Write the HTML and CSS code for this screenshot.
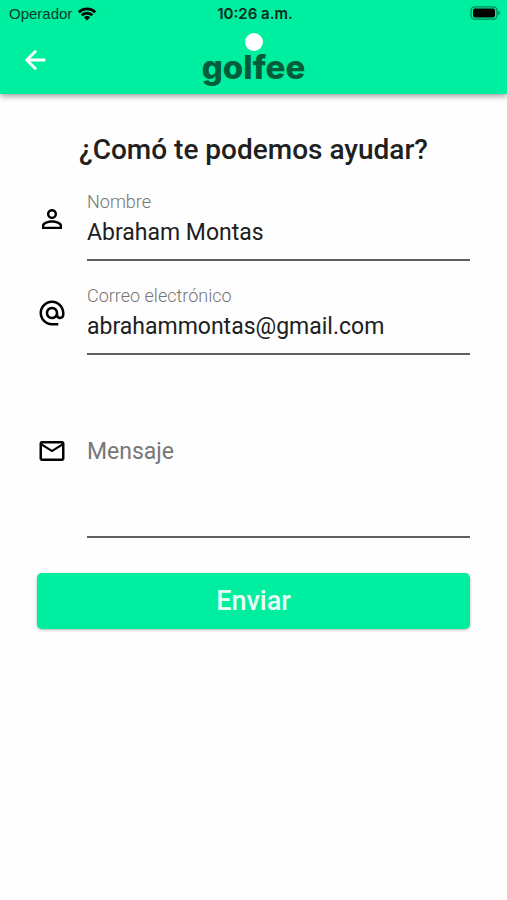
FILE: index.html
```html
<!DOCTYPE html>
<html lang="es">
<head>
<meta charset="utf-8">
<meta name="viewport" content="width=device-width, initial-scale=1">
<title>golfee</title>
<link rel="stylesheet" href="styles.css">
</head>
<body>
<header class="app-header">
  <div class="status-bar">
    <div class="carrier">
      <span>Operador</span>
      <svg class="wifi" viewBox="0 0 20 15" aria-hidden="true">
        <path d="M1.8 6.2a11.8 11.8 0 0 1 16.4 0M4.7 9.2a7.6 7.6 0 0 1 10.6 0" fill="none" stroke="currentColor" stroke-width="2.7"/>
        <path d="M10 14.4 6.9 11.3a4.4 4.4 0 0 1 6.2 0z" fill="currentColor"/>
      </svg>
    </div>
    <time class="clock">10:26 a.m.</time>
    <svg class="battery" viewBox="0 0 31 14" aria-hidden="true">
      <rect x="1" y=".8" width="26" height="12.4" rx="3.6" fill="none" stroke="currentColor" stroke-width="1.2" opacity=".45"/>
      <rect x="3" y="2.6" width="22" height="8.8" rx="1.8" fill="currentColor"/>
      <path d="M28.3 4.8a2.4 2.4 0 0 1 0 4.4z" fill="currentColor" opacity=".5"/>
    </svg>
  </div>
  <div class="toolbar">
    <button class="back" type="button" aria-label="Volver">
      <svg viewBox="0 0 24 24" aria-hidden="true"><path d="M20 11H7.83l5.59-5.59L12 4l-8 8 8 8 1.41-1.41L7.83 13H20z" fill="currentColor" stroke="currentColor" stroke-width=".4"/></svg>
    </button>
    <div class="brand"><span class="ball"></span><span class="wordmark">golfee</span></div>
  </div>
</header>
<main class="contact">
  <h1>¿Comó te podemos ayudar?</h1>
  <form class="form">
    <div class="row">
      <svg class="icon" viewBox="0 0 24 24" aria-hidden="true"><path d="M12 5.9a2.1 2.1 0 1 1 0 4.2 2.1 2.1 0 0 1 0-4.2m0 9c2.97 0 6.1 1.46 6.1 2.1v1.1H5.9V17c0-.64 3.13-2.1 6.1-2.1M12 4C9.79 4 8 5.79 8 8s1.79 4 4 4 4-1.79 4-4-1.79-4-4-4zm0 9c-2.67 0-8 1.34-8 4v3h16v-3c0-2.66-5.33-4-8-4z" fill="currentColor"/></svg>
      <div class="field">
        <label for="nombre">Nombre</label>
        <input id="nombre" type="text" value="Abraham Montas">
      </div>
    </div>
    <div class="row">
      <svg class="icon" viewBox="0 0 24 24" aria-hidden="true"><path d="M12 2C6.48 2 2 6.48 2 12s4.48 10 10 10h5v-2h-5c-4.34 0-8-3.66-8-8s3.66-8 8-8 8 3.66 8 8v1.43c0 .79-.71 1.57-1.5 1.57s-1.5-.78-1.5-1.57V12c0-2.76-2.24-5-5-5s-5 2.24-5 5 2.24 5 5 5c1.38 0 2.64-.56 3.54-1.47.65.89 1.77 1.47 2.96 1.47 1.97 0 3.5-1.6 3.5-3.57V12c0-5.52-4.48-10-10-10zm0 13c-1.66 0-3-1.34-3-3s1.34-3 3-3 3 1.34 3 3-1.34 3-3 3z" fill="currentColor"/></svg>
      <div class="field">
        <label for="correo">Correo electrónico</label>
        <input id="correo" type="email" value="abrahammontas@gmail.com">
      </div>
    </div>
    <div class="row row-message">
      <svg class="icon" viewBox="0 0 24 24" aria-hidden="true"><path d="M20 4H4c-1.1 0-1.99.9-1.99 2L2 18c0 1.1.9 2 2 2h16c1.1 0 2-.9 2-2V6c0-1.1-.9-2-2-2zm0 14H4V8l8 5 8-5v10zm-8-7L4 6h16l-8 5z" fill="currentColor"/></svg>
      <div class="field">
        <textarea id="mensaje" aria-label="Mensaje" placeholder="Mensaje"></textarea>
      </div>
    </div>
    <button class="submit" type="submit">Enviar</button>
  </form>
</main>
</body>
</html>
```
FILE: styles.css
```css
* {
  box-sizing: border-box;
}

body {
  margin: 0;
  background: #fefefe;
  color: #202020;
  font-family: Roboto, "Liberation Sans", sans-serif;
}

.app-header {
  background: #00ee9f;
  box-shadow: 0 2px 6px rgba(0, 0, 0, 0.4);
}

.status-bar {
  display: grid;
  grid-template-columns: 1fr auto 1fr;
  align-items: center;
  height: 26px;
  padding: 0 6px 0 9px;
  color: #000;
  font-family: "Liberation Sans", sans-serif;
  font-size: 15px;
}

.carrier {
  display: flex;
  align-items: center;
  gap: 5px;
  color: #053d2a;
}

.wifi {
  width: 20px;
  height: 15px;
  color: #000;
}

.clock {
  color: #032a1c;
  font-family: Inter, sans-serif;
  font-weight: 600;
}

.battery {
  justify-self: end;
  width: 31px;
  height: 14px;
}

.toolbar {
  display: grid;
  grid-template-columns: 1fr auto 1fr;
  height: 68px;
  padding: 0 20px;
}

.back {
  justify-self: start;
  align-self: center;
  width: 30px;
  height: 30px;
  padding: 0;
  border: 0;
  background: none;
  color: #fff;
}

.back svg {
  display: block;
}

.brand {
  position: relative;
  padding-top: 19px;
  color: #045c3b;
  font-family: Inter, sans-serif;
  font-size: 33px;
  font-weight: 800;
  line-height: 44px;
}

.ball {
  position: absolute;
  top: 7px;
  left: 50%;
  width: 18px;
  height: 18px;
  margin-left: -9px;
  border-radius: 50%;
  background: #fff;
}

.contact {
  padding: 36px 37px;
}

h1 {
  margin: 0;
  font-size: 28px;
  font-weight: 500;
  line-height: 40px;
  text-align: center;
}

.form {
  display: flex;
  flex-direction: column;
  gap: 23px;
  padding-top: 20px;
}

.row {
  display: flex;
  gap: 20px;
}

.icon {
  flex: none;
  width: 30px;
  height: 30px;
  margin-top: 14px;
  color: #000;
}

.field {
  display: flex;
  flex: 1;
  flex-direction: column;
  min-width: 0;
  border-bottom: 2px solid #606060;
}

label {
  color: #757575;
  font-size: 18px;
  font-weight: 300;
  line-height: 24px;
}

input,
textarea {
  width: 100%;
  padding: 0;
  border: 0;
  outline: 0;
  background: none;
  color: inherit;
  font: 23px Roboto, "Liberation Sans", sans-serif;
}

input {
  height: 45px;
  padding-bottom: 9px;
}

textarea {
  height: 158px;
  padding-top: 58px;
  line-height: 32px;
  resize: none;
}

textarea::placeholder {
  color: #777;
}

.row-message .icon {
  margin-top: 58px;
}

.submit {
  height: 56px;
  margin-top: 12px;
  border: 0;
  border-radius: 5px;
  background: #00ee9f;
  box-shadow: 0 1px 3px rgba(0, 0, 0, 0.3);
  color: #e9fff6;
  font: 500 27px Roboto, "Liberation Sans", sans-serif;
}
```
